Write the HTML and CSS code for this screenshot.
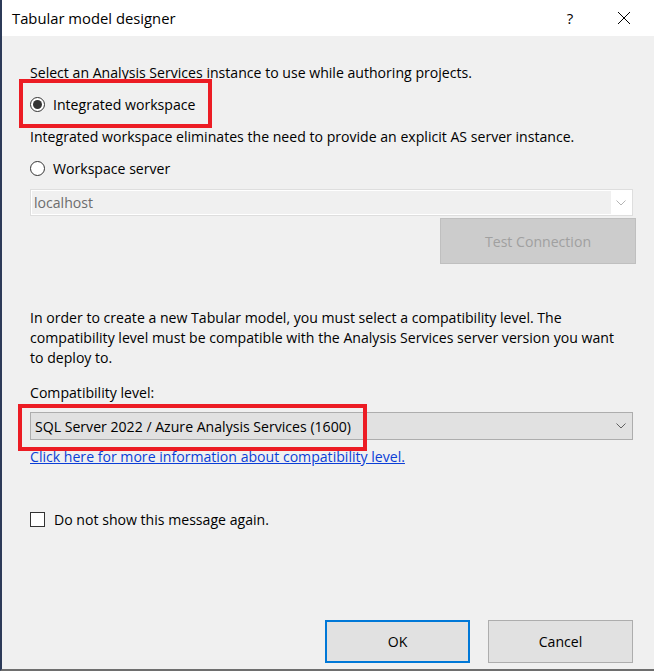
FILE: index.html
```html
<!DOCTYPE html>
<html lang="en">
<head>
<meta charset="utf-8">
<title>Tabular model designer</title>
<link rel="stylesheet" href="styles.css">
</head>
<body>
<div class="window">
  <div class="titlebar">
    <span class="title">Tabular model designer</span>
    <span class="help">?</span>
    <span class="close">
      <svg width="14" height="14" viewBox="0 0 14 14"><path d="M1 1 L13 13 M13 1 L1 13" stroke="#000" stroke-width="1" fill="none"/></svg>
    </span>
  </div>
  <div class="content">
    <div class="row">Select an Analysis Services instance to use while authoring projects.</div>
    <div class="row annotated">
      <span class="radio checked"></span><span class="label">Integrated workspace</span>
      <span class="redbox redbox-radio"></span>
    </div>
    <div class="row">Integrated workspace eliminates the need to provide an explicit AS server instance.</div>
    <div class="row">
      <span class="radio"></span><span class="label">Workspace server</span>
    </div>
    <div class="combo">
      <span class="combo-text">localhost</span>
      <span class="combo-arrow">
        <svg width="10" height="6" viewBox="0 0 10 6"><path d="M0.5 0.5 L5 5 L9.5 0.5" stroke="#b4b4b4" stroke-width="1" fill="none"/></svg>
      </span>
    </div>
    <div class="test-row">
      <div class="btn btn-disabled">Test Connection</div>
    </div>
    <p class="para">In order to create a new Tabular model, you must select a compatibility level. The<br>compatibility level must be compatible with the Analysis Services server version you want<br>to deploy to.</p>
    <div class="field-label">Compatibility level:</div>
    <div class="select-wrap">
      <div class="select">
        <span class="select-text">SQL Server 2022 / Azure Analysis Services (1600)</span>
        <svg width="10" height="6" viewBox="0 0 10 6"><path d="M0.5 0.5 L5 5 L9.5 0.5" stroke="#606060" stroke-width="1" fill="none"/></svg>
      </div>
      <span class="redbox redbox-select"></span>
    </div>
    <a class="link" href="#">Click here for more information about compatibility level.</a>
    <div class="check-row">
      <span class="checkbox"></span><span class="label">Do not show this message again.</span>
    </div>
    <div class="footer">
      <div class="btn btn-primary">OK</div>
      <div class="btn">Cancel</div>
    </div>
  </div>
</div>
</body>
</html>
```
FILE: styles.css
```css
* { box-sizing: border-box; }
html, body { margin: 0; padding: 0; }
body {
  width: 654px;
  height: 671px;
  overflow: hidden;
  font-family: "Open Sans", "Noto Sans", sans-serif;
  font-size: 14.1px;
  color: #000;
  background: #f0f0f0;
}
.window {
  width: 654px;
  height: 671px;
  display: flex;
  flex-direction: column;
  border-left: 2px solid #2c3a58;
  border-bottom: 2px solid #6e6e6e;
  background: #f0f0f0;
}
.titlebar {
  height: 36px;
  flex: none;
  background: #fff;
  display: flex;
  align-items: center;
  padding-left: 10px;
}
.title {
  font-size: 14.8px;
  flex: 1;
}
.help {
  font-size: 15px;
  width: 20px;
  text-align: center;
  margin-right: 37px;
}
.close {
  display: flex;
  width: 14px;
  margin-right: 23px;
}
.content {
  flex: 1;
  display: flex;
  flex-direction: column;
  padding: 20px 21px 6px 28px;
}
.row {
  height: 32px;
  display: flex;
  align-items: center;
  white-space: nowrap;
  position: relative;
}
.radio {
  width: 15px;
  height: 15px;
  border: 1px solid #333;
  border-radius: 50%;
  background: #fff;
  margin-right: 8px;
  display: flex;
  align-items: center;
  justify-content: center;
  flex: none;
}
.radio.checked::after {
  content: "";
  width: 9px;
  height: 9px;
  border-radius: 50%;
  background: #333;
}
.redbox {
  position: absolute;
  border: 4px solid #ec1c24;
  pointer-events: none;
}
.redbox-radio {
  left: -11px;
  top: -9px;
  width: 193px;
  height: 49px;
}
.combo {
  margin-top: 5px;
  height: 27px;
  border: 1px solid #dedede;
  box-shadow: inset 0 0 0 1px #fff;
  background: #f0f0f0;
  display: flex;
  align-items: center;
  padding-left: 3px;
}
.combo-text {
  flex: 1;
  color: #6d6d6d;
}
.combo-arrow {
  width: 20px;
  height: 23px;
  margin-right: 1px;
  background: #fff;
  display: flex;
  align-items: center;
  justify-content: center;
}
.test-row {
  margin-top: 2px;
  display: flex;
  justify-content: flex-end;
  margin-right: -3px;
}
.btn {
  width: 145px;
  height: 43px;
  display: flex;
  align-items: center;
  justify-content: center;
  background: #e1e1e1;
  border: 1px solid #adadad;
}
.btn-disabled {
  width: 196px;
  height: 46px;
  background: #cccccc;
  border-color: #bfbfbf;
  color: #a0a0a0;
}
.btn-primary {
  border: 2px solid #0078d7;
}
.para {
  margin: 44px 0 0 0;
  line-height: 20px;
  white-space: nowrap;
}
.field-label {
  margin-top: 15px;
  line-height: 20px;
}
.select-wrap {
  position: relative;
  margin-top: 9px;
}
.select {
  height: 28px;
  background: #e1e1e1;
  border: 1px solid #adadad;
  display: flex;
  align-items: center;
  padding: 0 6px 0 4px;
}
.select-text { flex: 1; }
.redbox-select {
  left: -12px;
  top: -8px;
  width: 349px;
  height: 47px;
}
.link {
  margin-top: 7px;
  line-height: 20px;
  color: #0b3ed6;
  text-decoration: underline;
  align-self: flex-start;
}
.check-row {
  margin-top: 42px;
  height: 20px;
  display: flex;
  align-items: center;
}
.checkbox {
  width: 15px;
  height: 15px;
  border: 1px solid #333;
  background: #fff;
  margin-right: 9px;
}
.footer {
  margin-top: auto;
  display: flex;
  justify-content: flex-end;
  gap: 18px;
}
```
